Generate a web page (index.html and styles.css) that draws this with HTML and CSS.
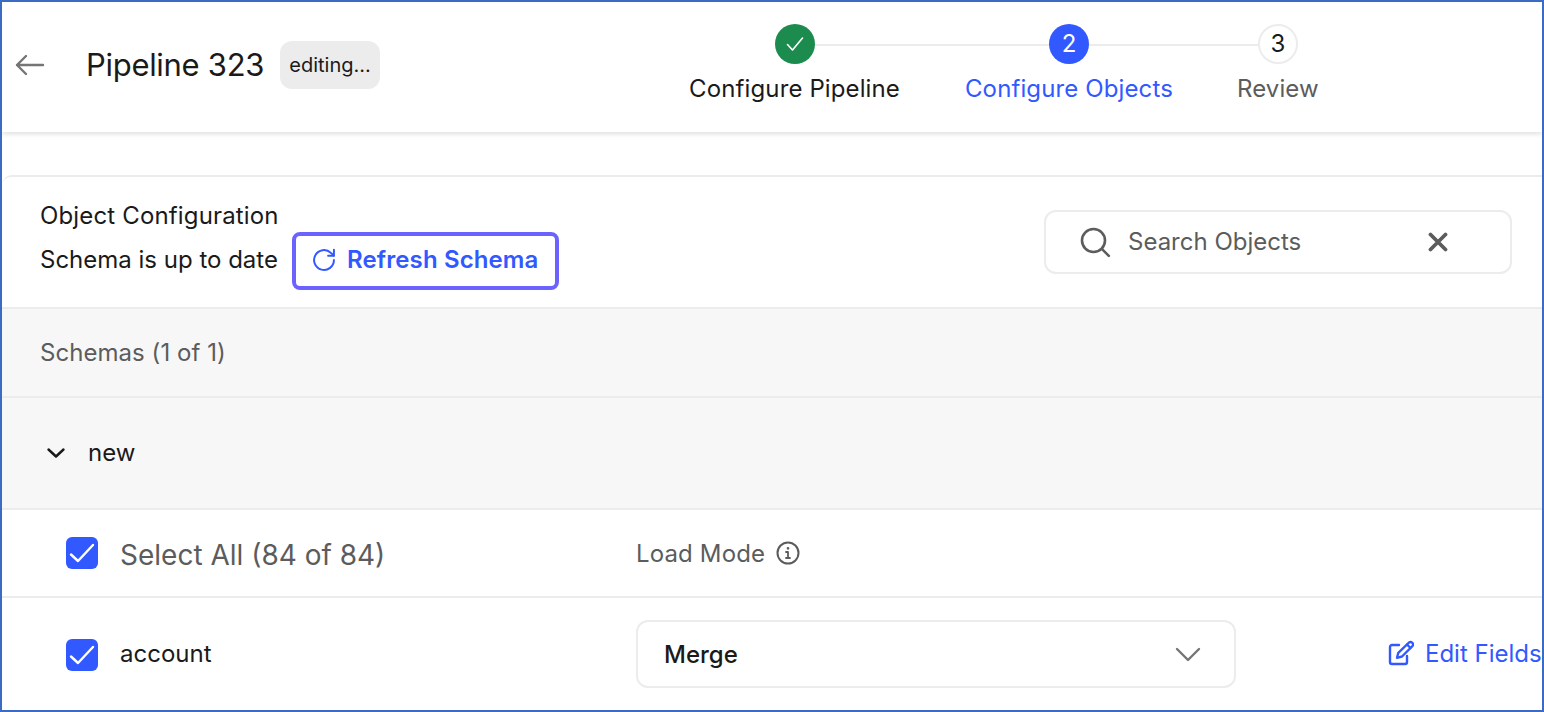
FILE: index.html
```html
<!DOCTYPE html>
<html lang="en">
<head>
<meta charset="utf-8">
<title>Pipeline 323</title>
<link rel="stylesheet" href="styles.css">
</head>
<body>
<div class="frame">
  <header class="topbar">
    <button class="back" aria-label="Back">
      <svg width="30" height="24" viewBox="0 0 30 24" fill="none" stroke="#757575" stroke-width="2.4" stroke-linecap="round" stroke-linejoin="round"><path d="M2 12h26M11 3 2 12l9 9"/></svg>
    </button>
    <h1 class="title">Pipeline 323</h1>
    <span class="badge">editing...</span>
    <ol class="stepper">
      <li class="step done">
        <span class="dot"><svg width="22" height="22" viewBox="0 0 22 22" fill="none" stroke="#fff" stroke-width="1.600" stroke-linecap="round" stroke-linejoin="round"><path d="M3.500 11.500 8.500 17 18.500 5"/></svg></span>
        <span class="label">Configure Pipeline</span>
      </li>
      <li class="step active">
        <span class="dot">2</span>
        <span class="label">Configure Objects</span>
      </li>
      <li class="step todo">
        <span class="dot">3</span>
        <span class="label">Review</span>
      </li>
    </ol>
  </header>

  <main class="card">
    <section class="card-head">
      <div class="head-text">
        <div class="heading">Object Configuration</div>
        <div class="status-line">
          <span class="status-text">Schema is up to date</span>
          <button class="refresh">
            <svg width="28" height="28" viewBox="0 0 24 24" fill="none" stroke="#3259ff" stroke-width="1.700" stroke-linecap="round" stroke-linejoin="round"><path d="M20.500 12a8.500 8.500 0 1 1-2.600-6.100L20.500 8.300"/><path d="M20.500 3.200v5.100h-5"/></svg>
            <span>Refresh Schema</span>
          </button>
        </div>
      </div>
      <div class="search">
        <svg class="search-icon" width="32" height="32" viewBox="0 0 32 32" fill="none" stroke="#5c5c5c" stroke-width="2.600" stroke-linecap="round"><circle cx="14.500" cy="14.500" r="11.500"/><path d="m22.800 22.800 7 7"/></svg>
        <span class="search-text">Search Objects</span>
        <svg class="clear" width="20" height="20" viewBox="0 0 20 20" fill="none" stroke="#5c5c5c" stroke-width="3.800" stroke-linecap="round"><path d="m2.500 2.500 15 15M17.500 2.500l-15 15"/></svg>
      </div>
    </section>

    <div class="schemas-row">Schemas (1 of 1)</div>

    <div class="group-row">
      <svg width="20" height="12" viewBox="0 0 20 12" fill="none" stroke="#1a1a1a" stroke-width="2.400" stroke-linecap="round" stroke-linejoin="round"><path d="m2.500 2.500 7.500 7 7.500-7"/></svg>
      <span class="group-name">new</span>
    </div>

    <div class="row select-row">
      <div class="col-name">
        <span class="check"><svg width="32" height="32" viewBox="0 0 32 32" fill="none" stroke="#fff" stroke-width="2.400" stroke-linecap="round" stroke-linejoin="round"><path d="M5 17.500 12 24 27 8"/></svg></span>
        <span class="select-label">Select All (84 of 84)</span>
      </div>
      <div class="load-head">
        <span>Load Mode</span>
        <svg width="24" height="24" viewBox="0 0 24 24" fill="none" stroke="#5c5c5c" stroke-width="2" stroke-linecap="round"><circle cx="12" cy="12" r="10.500"/><path d="M12 11v6M10 11h2M10 17h4" stroke-width="1.800"/><circle cx="12" cy="7.300" r=".6" stroke-width="1.500"/></svg>
      </div>
    </div>

    <div class="row object-row">
      <div class="col-name">
        <span class="check"><svg width="32" height="32" viewBox="0 0 32 32" fill="none" stroke="#fff" stroke-width="2.400" stroke-linecap="round" stroke-linejoin="round"><path d="M5 17.500 12 24 27 8"/></svg></span>
        <span class="object-name">account</span>
      </div>
      <div class="select">
        <span>Merge</span>
        <svg width="26" height="16" viewBox="0 0 26 16" fill="none" stroke="#757575" stroke-width="2.400" stroke-linecap="round" stroke-linejoin="round"><path d="m2 3 11 11L24 3"/></svg>
      </div>
      <a class="edit">
        <svg width="26" height="26" viewBox="0 0 26 26" fill="none" stroke="#3259ff" stroke-width="2.400" stroke-linecap="round" stroke-linejoin="round"><path d="M11 5H4a2 2 0 0 0-2 2v15a2 2 0 0 0 2 2h13a2 2 0 0 0 2-2v-6"/><path d="M21 2.500a2.500 2.500 0 0 1 3.500 3.500L14 16.500l-5 1.300 1.300-5z"/><path d="m19 4.500 3.500 3.500"/></svg>
        <span>Edit Fields</span>
      </a>
    </div>
  </main>
</div>
</body>
</html>
```

FILE: styles.css
```css
* { box-sizing: border-box; }
html, body { margin: 0; height: 100%; background: #fff; }
body { font-family: Inter, "Liberation Sans", sans-serif; color: #1a1a1a; overflow: hidden; }
.frame { width: 1544px; height: 712px; border: 2px solid #3a6bc5; overflow: hidden; background: #fff; }

.topbar { display: flex; align-items: center; height: 130px; padding-left: 13px; box-shadow: 0 2px 5px rgba(0,0,0,.13); position: relative; }
.back { display: flex; border: 0; padding: 0; background: none; margin-bottom: 5px; }
.title { margin: 0 0 5px 41px; font-size: 31px; font-weight: 400; line-height: 40px; letter-spacing: -.3px; white-space: nowrap; }
.badge { margin: 0 0 5px 16px; width: 100px; height: 48px; display: flex; align-items: center; justify-content: center; background: #ececec; border-radius: 12px; font-size: 20px; }

.stepper { list-style: none; display: flex; gap: 65px; margin: 0 0 0 309px; padding: 22px 0 0; align-self: flex-start; }
.step { display: flex; flex-direction: column; align-items: center; position: relative; }
.dot { width: 40px; height: 40px; border-radius: 50%; display: flex; align-items: center; justify-content: center; font-size: 24px; line-height: 1; position: relative; z-index: 1; }
.label { margin-top: 10px; font-size: 24px; line-height: 30px; letter-spacing: .12px; white-space: nowrap; }
.step::after { content: ""; position: absolute; top: 20px; left: 50%; height: 2px; background: #ececec; }
.done::after { width: 274px; }
.active::after { width: 209px; }
.todo { margin-left: -1px; }
.todo::after { display: none; }
.done .dot { background: #1c8c4e; }
.active .dot { background: #3259ff; color: #fff; }
.active .label { color: #3259ff; }
.todo .dot { background: #fff; border: 2px solid #ececec; color: #1a1a1a; }
.todo .label { color: #5c5c5c; }

.card { margin-top: 43px; border-top: 2px solid #ececec; border-top-left-radius: 10px; }
.card-head { height: 132px; display: flex; justify-content: space-between; align-items: flex-start; padding: 0 30px 0 38px; border-bottom: 2px solid #ececec; }
.head-text { padding-top: 24px; }
.heading { font-size: 24px; line-height: 30px; font-weight: 400; letter-spacing: .15px; }
.status-line { display: flex; align-items: center; gap: 14px; margin-top: 1px; font-size: 24px; line-height: 30px; }
.status-text { padding-bottom: 2px; }
.refresh { display: flex; flex: none; align-items: center; gap: 9px; width: 267px; height: 58px; padding: 0 0 2px 14px; border: 4px solid #6c63ff; border-radius: 8px; background: #fff; font: 600 24px/30px Inter, sans-serif; letter-spacing: .12px; color: #3259ff; }
.search { display: flex; align-items: center; width: 468px; height: 64px; margin-top: 33px; padding: 0 62px 0 33px; border: 2px solid #ececec; border-radius: 12px; color: #5c5c5c; font-size: 24px; }
.search-text { margin-left: 17px; flex: 1; padding-bottom: 2px; }

.schemas-row { height: 89px; display: flex; align-items: center; padding-left: 38px; background: #f7f7f7; border-bottom: 2px solid #ececec; color: #5c5c5c; font-size: 24px; letter-spacing: .05px; }
.group-row { height: 112px; display: flex; align-items: center; gap: 22px; padding-left: 44px; background: #f7f7f7; border-bottom: 2px solid #ececec; font-size: 24px; }
.group-name { padding-bottom: 2px; }

.row { display: flex; align-items: center; }
.select-row { height: 88px; border-bottom: 2px solid #ececec; }
.object-row { height: 112px; }
.col-name { width: 634px; padding-left: 64px; display: flex; align-items: center; gap: 22px; font-size: 24px; flex: none; }
.check { width: 32px; height: 32px; border-radius: 6px; background: #3259ff; display: flex; flex: none; }
.object-row .check { margin-top: 2px; }
.object-name { padding-bottom: 2px; }
.select-label { color: #5c5c5c; font-size: 28px; padding-top: 3px; }
.load-head { display: flex; align-items: center; gap: 11px; color: #5c5c5c; font-size: 24px; font-weight: 400; letter-spacing: .15px; }
.select { width: 600px; height: 68px; flex: none; display: flex; align-items: center; justify-content: space-between; padding: 0 33px 0 26px; border: 2px solid #ececec; border-radius: 12px; font-size: 24px; font-weight: 450; }
.edit { margin-left: 152px; display: flex; align-items: center; gap: 11px; padding-bottom: 2px; color: #3259ff; font-size: 24px; white-space: nowrap; }
```
